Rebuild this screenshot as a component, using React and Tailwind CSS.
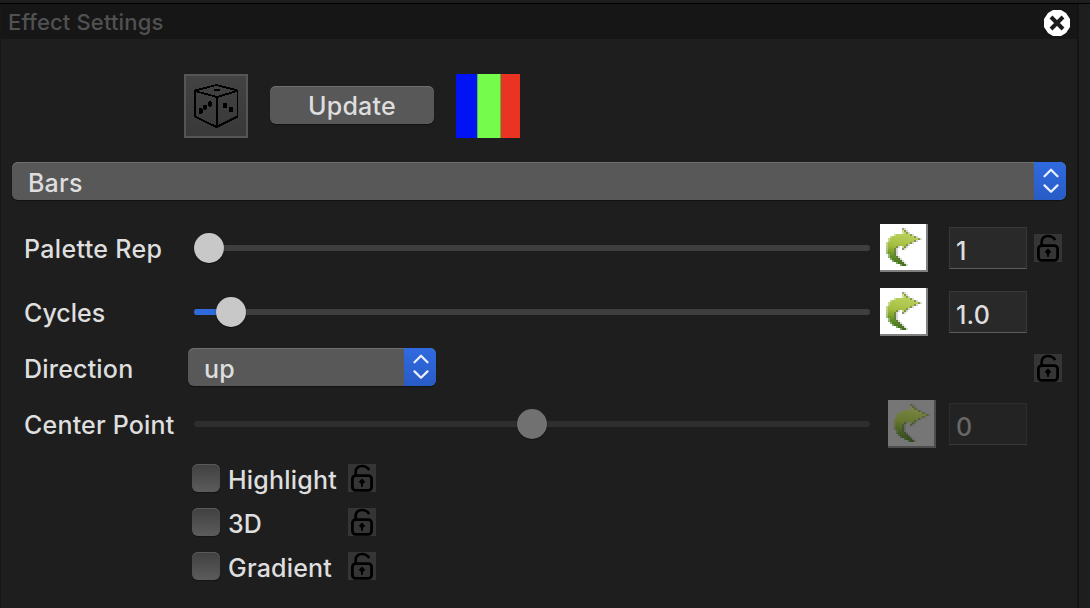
import React from "react";

function DiceIcon() {
  return (
    <svg width="60" height="60" viewBox="2 2 60 60" fill="none" stroke="#000" strokeWidth="1.9" shapeRendering="crispEdges">
      <path d="M32.5 11 L53.5 16.5 V42.5 L32.5 53 L11 42.5 V16.5 Z" />
      <path d="M11 17 L33 23 L53 17 M33 23 V53" />
      <g fill="#000" stroke="none">
        <rect x="30" y="15" width="6" height="2" />
        <ellipse cx="16.7" cy="37" rx="2.2" ry="2.9" />
        <ellipse cx="21" cy="33.3" rx="2.2" ry="2.7" />
        <ellipse cx="26" cy="30" rx="2.2" ry="2.9" />
        <ellipse cx="41" cy="31.5" rx="2.3" ry="2.7" />
        <ellipse cx="47" cy="35.4" rx="2.3" ry="2.7" />
      </g>
    </svg>
  );
}

function Lock() {
  return (
    <svg className="block shrink-0 bg-[#353535]" width="28" height="28" viewBox="0 0 28 28" fill="none" stroke="#000" strokeWidth="2.8">
      <rect x="4.4" y="11.6" width="19.2" height="14.8" rx="3.4" />
      <path d="M7.6 12 V8 C7.6 4 10.5 2 14 2 C17.5 2 19.5 3.3 21.2 6" strokeWidth="2.6" />
      <path d="M14 14.6 L17.2 17.8 L15 20 V22.8 H13 V20 L10.8 17.8 Z" fill="#000" stroke="none" />
    </svg>
  );
}

// Each entry is [row, first column, end column] on a 2px grid.
const ARROW_SPANS = [
  [2, 11, 12],
  [3, 11, 13],
  [4, 11, 14],
  [5, 7, 16],
  [6, 5, 18],
  [7, 4, 20],
  [8, 4, 18],
  [9, 3, 16],
  [10, 3, 14],
  [11, 3, 9],
  [11, 11, 13],
  [12, 3, 8],
  [12, 11, 12],
  [13, 3, 8],
  [14, 3, 8],
  [15, 4, 8],
  [16, 4, 9],
  [17, 5, 10],
  [18, 6, 11],
  [19, 8, 12],
  [20, 10, 13],
];

function ResetButton({ disabled }) {
  const gradient = disabled ? "arrowOff" : "arrowOn";
  return (
    <button className={`block h-12 w-12 shrink-0 border-r-2 border-b-2 ${disabled ? "border-[#4d4d4d] bg-[#767676]" : "border-[#808080] bg-white"}`}>
      <svg width="46" height="46" viewBox="0 0 46 46" shapeRendering="crispEdges">
        <defs>
          <linearGradient id={gradient} gradientUnits="userSpaceOnUse" x1="26" y1="8" x2="20" y2="42">
            <stop offset="0" stopColor={disabled ? "#788545" : "#bdd45f"} />
            <stop offset="0.45" stopColor={disabled ? "#66752f" : "#a3bd42"} />
            <stop offset="1" stopColor={disabled ? "#2a471a" : "#326b12"} />
          </linearGradient>
        </defs>
        {ARROW_SPANS.map(([row, from, to]) => (
          <g key={`${row}-${from}`}>
            <rect x={from * 2} y={row * 2} width={(to - from) * 2} height="2" fill={`url(#${gradient})`} />
            <rect x={from * 2} y={row * 2} width="2" height="2" fill={disabled ? "#767676" : "#fff"} opacity="0.35" />
            <rect x={to * 2 - 2} y={row * 2} width="2" height="2" fill={disabled ? "#3a4430" : "#56663f"} opacity="0.5" />
            <rect x={to * 2} y={row * 2} width="2" height="2" fill={disabled ? "#4a5045" : "#8b9283"} opacity="0.35" />
          </g>
        ))}
      </svg>
    </button>
  );
}

function Stepper() {
  return (
    <span className="flex h-full w-8 shrink-0 items-center justify-center rounded-r-[6px] bg-linear-to-b from-[#306ae0] to-[#285cc6]">
      <svg className="relative left-[0.5px]" width="18" height="26" viewBox="0 0 18 26" fill="none" stroke="#e8effc" strokeWidth="2.3" strokeLinecap="round" strokeLinejoin="round">
        <path d="M2.5 8.2 L9 1.8 L15.5 8.2 M2.5 17.4 L9 23.8 L15.5 17.4" />
      </svg>
    </span>
  );
}

function Select({ value, className }) {
  return (
    <div className={`flex h-[38px] items-center rounded-[6px] bg-[#585858] shadow-[inset_0_1px_0_#707070,0_1px_1px_#111] ${className}`}>
      <span className="relative top-[2px] flex-1 pl-4">{value}</span>
      <Stepper />
    </div>
  );
}

function Slider({ thumb, fill, disabled }) {
  return (
    <div className={`relative h-[6px] w-[676px] shrink-0 rounded-full ${disabled ? "bg-[#2e2e2e]" : "bg-[#3f3f3f]"}`}>
      {fill ? <div className="h-full w-9 rounded-full bg-[#3069db]" /> : null}
      <div
        className={`absolute -top-3 h-[30px] w-[30px] rounded-full shadow-[0_1px_1px_#111] ${disabled ? "bg-[#717171]" : "bg-[#c8c8c8]"}`}
        style={{ left: thumb }}
      />
    </div>
  );
}

function NumberField({ value, disabled }) {
  return (
    <div
      className={`flex h-[42px] w-[78px] shrink-0 items-center border border-b-[1.5px] pl-[6px] ${
        disabled ? "border-[#2c2c2c] border-b-[#3a3a3a] bg-[#232323] text-[#686868]" : "border-[#373737] border-b-[#5c5c5c] bg-[#292929]"
      }`}
    >
      <span className="relative top-[3px]">{value}</span>
    </div>
  );
}

function Label({ children, width }) {
  return <span className={`relative top-px shrink-0 whitespace-nowrap ${width}`}>{children}</span>;
}

function CheckRow({ label }) {
  return (
    <div className="flex h-7 items-center pl-[192px]">
      <span className="h-7 w-7 shrink-0 rounded-[6px] bg-linear-to-b from-[#404040] to-[#5c5c5c] shadow-[inset_0_1px_0_#5a5a5a,0_1px_1px_#141414]" />
      <span className="relative top-[2px] ml-2 w-[120px] shrink-0">{label}</span>
      <Lock />
    </div>
  );
}

export default function App() {
  return (
    <div className="flex h-[608px] w-[1090px] flex-col overflow-hidden bg-[#1e1e1e] font-['Inter',sans-serif] text-[25px] leading-[30px] font-[450] tracking-[0.2px] text-[#dedede]">
      <div className="h-[4px] shrink-0 border-b border-black bg-[#1e1e1e]" />
      <div className="flex min-h-0 flex-1">
        <div className="flex w-[1079px] flex-col border-r-2 border-l border-r-[#141414] border-l-[#181818]">
          <header className="flex h-[35px] shrink-0 items-center bg-[#161616] pr-[7px] pl-[7px]">
            <span className="flex-1 text-[22px] tracking-[0.15px] text-[#515151]">Effect Settings</span>
            <svg className="relative top-px" width="26" height="26" viewBox="0 0 26 26">
              <path d="M9 0 H17 L22 3 L24 6 L26 9 V17 L24 20 L22 23 L17 26 H9 L4 23 L2 20 L0 17 V9 L2 6 L4 3 Z" fill="#fff" />
              <path d="M7 7 L19 19 M19 7 L7 19" stroke="#1b1b1b" strokeWidth="4" />
            </svg>
          </header>
          <main className="-ml-px flex flex-col">
            <div className="mt-[35px] flex h-16 items-center pl-[184px]">
              <button className="h-16 w-16 border-2 border-[#555] bg-linear-to-b from-[#424242] to-[#393939]">
                <DiceIcon />
              </button>
              <button className="relative top-[-1px] ml-[22px] flex h-[38px] w-[164px] items-center justify-center rounded-[6px] bg-[#585858] shadow-[inset_0_1px_0_#707070,0_1px_1px_#111]">
                <span className="relative top-px">Update</span>
              </button>
              <div className="ml-[22px] flex h-16 w-16">
                <span className="w-[21px] bg-[#0013f5]" />
                <span className="w-6 border-x border-[#58b842] bg-[#75fb4c]" />
                <span className="flex-1 bg-[#ea3323]" />
              </div>
            </div>
            <div className="mt-6 pl-3">
              <Select value="Bars" className="w-[1054px]" />
            </div>
            <div className="mt-6 flex h-12 items-center pl-6">
              <Label width="w-[170px]"><span className="tracking-[0.35px]">Palette Rep</span></Label>
              <Slider thumb={0} />
              <div className="ml-[10px]"><ResetButton /></div>
              <div className="ml-[21px]"><NumberField value="1" /></div>
              <div className="ml-[7px]"><Lock /></div>
            </div>
            <div className="mt-4 flex h-12 items-center pl-6">
              <Label width="w-[170px]"><span className="tracking-normal">Cycles</span></Label>
              <Slider thumb={22} fill />
              <div className="ml-[10px]"><ResetButton /></div>
              <div className="ml-[21px]"><NumberField value="1.0" /></div>
            </div>
            <div className="mt-3 flex h-[38px] items-center pl-6">
              <Label width="w-[164px] pt-0.5">Direction</Label>
              <Select value="up" className="w-[248px]" />
              <div className="ml-[598px] pt-0.5"><Lock /></div>
            </div>
            <div className="mt-[14px] flex h-12 items-center pl-6">
              <Label width="w-[170px]">Center Point</Label>
              <Slider thumb={323} disabled />
              <div className="ml-[18px]"><ResetButton disabled /></div>
              <div className="ml-[13px]"><NumberField value="0" disabled /></div>
            </div>
            <div className="mt-4 flex flex-col gap-4">
              <CheckRow label="Highlight" />
              <CheckRow label="3D" />
              <CheckRow label="Gradient" />
            </div>
          </main>
        </div>
      </div>
    </div>
  );
}
